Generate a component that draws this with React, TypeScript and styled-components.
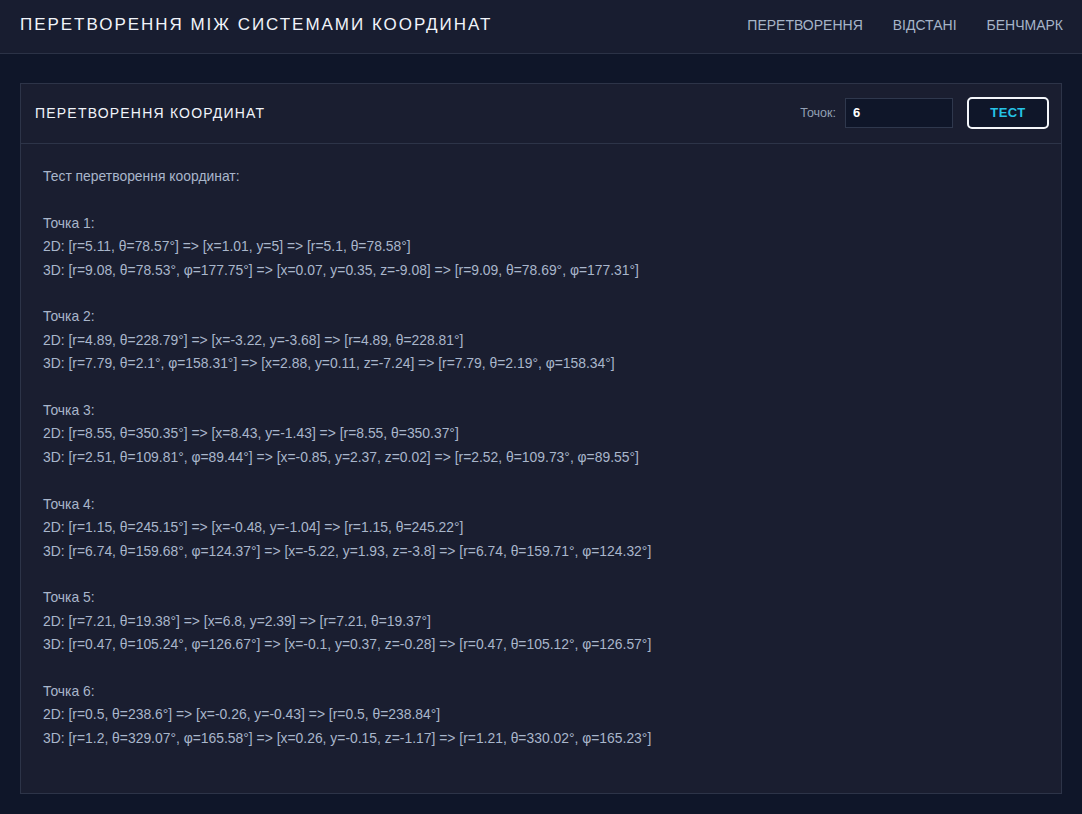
import React from "react";
import styled, { createGlobalStyle } from "styled-components";

const GlobalStyle = createGlobalStyle`
  html, body {
    margin: 0;
    padding: 0;
    background: #0f1629;
  }
  body {
    font-family: "Liberation Sans", Arial, sans-serif;
  }
  * { box-sizing: border-box; }
`;

const Page = styled.div`
  min-height: 814px;
  background: #0f1629;
  display: flex;
  flex-direction: column;
`;

const Header = styled.header`
  height: 54px;
  background: #181d30;
  border-bottom: 1px solid #2b3246;
  display: flex;
  align-items: center;
  justify-content: space-between;
  padding: 0 19px 4px 20px;
`;

const Title = styled.h1`
  margin: 0;
  font-size: 17px;
  font-weight: 400;
  letter-spacing: 1.97px;
  color: #f1f4fa;
`;

const Nav = styled.nav`
  display: flex;
  gap: 30px;
`;

const NavLink = styled.a`
  font-size: 14px;
  color: #a6b4c8;
  letter-spacing: 0;
  text-decoration: none;
  cursor: pointer;
`;

const Main = styled.main`
  padding: 29px 20px 20px 20px;
  flex: 1;
  display: flex;
`;

const Card = styled.section`
  flex: 1;
  background: #1a1e30;
  border: 1px solid #2d3448;
  display: flex;
  flex-direction: column;
`;

const CardHeader = styled.div`
  height: 60px;
  border-bottom: 1px solid #2d3448;
  display: flex;
  align-items: center;
  justify-content: space-between;
  padding: 1px 12px 3px 14px;
`;

const CardTitle = styled.h2`
  margin: 0;
  font-size: 14px;
  font-weight: 400;
  letter-spacing: 1.2px;
  color: #f1f4fa;
`;

const Controls = styled.div`
  display: flex;
  align-items: center;
`;

const Label = styled.label`
  font-size: 12.5px;
  color: #93a0b4;
  margin-right: 9px;
`;

const Input = styled.input`
  width: 108px;
  height: 30px;
  background: #0f1629;
  border: 1px solid #2f384d;
  color: #ffffff;
  font-family: "Liberation Sans", Arial, sans-serif;
  font-size: 13px;
  font-weight: 700;
  padding: 0 7px;
  outline: none;
  margin-right: 14px;
`;

const Button = styled.button`
  width: 82px;
  height: 32px;
  background: #0f1629;
  border: 2px solid #f4f6fa;
  border-radius: 5px;
  color: #25c3e6;
  font-family: "Liberation Sans", Arial, sans-serif;
  font-size: 13px;
  font-weight: 700;
  letter-spacing: 0.5px;
  cursor: pointer;
`;

const Output = styled.pre`
  margin: 0;
  flex: 1;
  padding: 21px 22px 21px 22px;
  font-family: "Liberation Sans", Arial, sans-serif;
  font-size: 13.9px;
  line-height: 23.4px;
  color: #a9b6cb;
  white-space: pre-wrap;
`;

const results = `Тест перетворення координат:

Точка 1:
2D: [r=5.11, θ=78.57°] => [x=1.01, y=5] => [r=5.1, θ=78.58°]
3D: [r=9.08, θ=78.53°, φ=177.75°] => [x=0.07, y=0.35, z=-9.08] => [r=9.09, θ=78.69°, φ=177.31°]

Точка 2:
2D: [r=4.89, θ=228.79°] => [x=-3.22, y=-3.68] => [r=4.89, θ=228.81°]
3D: [r=7.79, θ=2.1°, φ=158.31°] => [x=2.88, y=0.11, z=-7.24] => [r=7.79, θ=2.19°, φ=158.34°]

Точка 3:
2D: [r=8.55, θ=350.35°] => [x=8.43, y=-1.43] => [r=8.55, θ=350.37°]
3D: [r=2.51, θ=109.81°, φ=89.44°] => [x=-0.85, y=2.37, z=0.02] => [r=2.52, θ=109.73°, φ=89.55°]

Точка 4:
2D: [r=1.15, θ=245.15°] => [x=-0.48, y=-1.04] => [r=1.15, θ=245.22°]
3D: [r=6.74, θ=159.68°, φ=124.37°] => [x=-5.22, y=1.93, z=-3.8] => [r=6.74, θ=159.71°, φ=124.32°]

Точка 5:
2D: [r=7.21, θ=19.38°] => [x=6.8, y=2.39] => [r=7.21, θ=19.37°]
3D: [r=0.47, θ=105.24°, φ=126.67°] => [x=-0.1, y=0.37, z=-0.28] => [r=0.47, θ=105.12°, φ=126.57°]

Точка 6:
2D: [r=0.5, θ=238.6°] => [x=-0.26, y=-0.43] => [r=0.5, θ=238.84°]
3D: [r=1.2, θ=329.07°, φ=165.58°] => [x=0.26, y=-0.15, z=-1.17] => [r=1.21, θ=330.02°, φ=165.23°]
`;

export default function App() {
  return (
    <>
      <GlobalStyle />
      <Page>
        <Header>
          <Title>ПЕРЕТВОРЕННЯ МІЖ СИСТЕМАМИ КООРДИНАТ</Title>
          <Nav>
            <NavLink>ПЕРЕТВОРЕННЯ</NavLink>
            <NavLink>ВІДСТАНІ</NavLink>
            <NavLink>БЕНЧМАРК</NavLink>
          </Nav>
        </Header>
        <Main>
          <Card>
            <CardHeader>
              <CardTitle>ПЕРЕТВОРЕННЯ КООРДИНАТ</CardTitle>
              <Controls>
                <Label htmlFor="points">Точок:</Label>
                <Input id="points" type="text" defaultValue="6" />
                <Button>ТЕСТ</Button>
              </Controls>
            </CardHeader>
            <Output>{results}</Output>
          </Card>
        </Main>
      </Page>
    </>
  );
}
